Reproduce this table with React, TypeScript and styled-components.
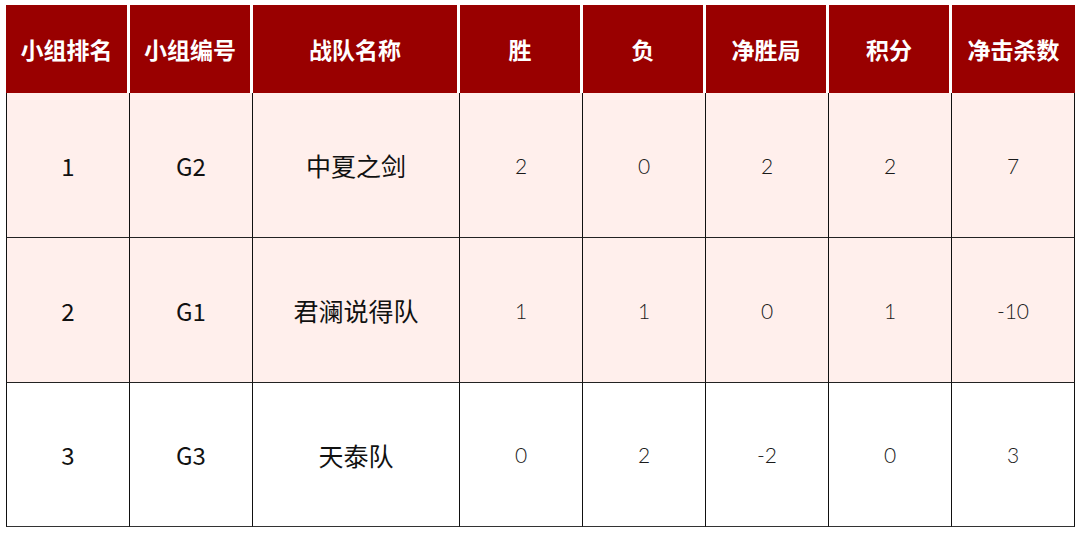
import { FC } from 'react';
import styled, { createGlobalStyle } from 'styled-components';

type Row = {
  rank: string;
  group: string;
  team: string;
  stats: string[];
  tinted: boolean;
};

const headers: string[] = ['小组排名', '小组编号', '战队名称', '胜', '负', '净胜局', '积分', '净击杀数'];

const rows: Row[] = [
  { rank: '1', group: 'G2', team: '中夏之剑', stats: ['2', '0', '2', '2', '7'], tinted: true },
  { rank: '2', group: 'G1', team: '君澜说得队', stats: ['1', '1', '0', '1', '-10'], tinted: true },
  { rank: '3', group: 'G3', team: '天泰队', stats: ['0', '2', '-2', '0', '3'], tinted: false },
];

const GlobalStyle = createGlobalStyle`
  html, body {
    margin: 0;
    padding: 0;
    background: #fff;
  }
  body {
    font-family: "Noto Sans CJK SC", "Noto Sans", sans-serif;
  }
`;

const App: FC = () => (
  <>
    <GlobalStyle />
    <Page>
      <Grid>
        {headers.map((title) => (
          <HeadCell key={title}>{title}</HeadCell>
        ))}
        {rows.map((row, i) => (
          <BodyRow key={row.rank} $tinted={row.tinted} $last={i === rows.length - 1}>
            <Cell $first>
              <MainText>{row.rank}</MainText>
            </Cell>
            <Cell>
              <MainText>{row.group}</MainText>
            </Cell>
            <Cell>
              <TeamText>{row.team}</TeamText>
            </Cell>
            {row.stats.map((value, j) => (
              <Cell key={j}>
                <StatText>{value}</StatText>
              </Cell>
            ))}
          </BodyRow>
        ))}
      </Grid>
    </Page>
  </>
);

export default App;

const Page = styled.div`
  width: 1080px;
  height: 534px;
  padding: 5px 6px 0 6px;
  box-sizing: border-box;
`;

const Grid = styled.div`
  display: grid;
  grid-template-columns: 124px 123px 207px repeat(5, 123px);
  grid-template-rows: 88px 145px 145px 144px;
  width: 1069px;
`;

const HeadCell = styled.div`
  display: flex;
  align-items: center;
  justify-content: center;
  background: #990000;
  color: #fff;
  font-size: 23px;
  font-weight: 700;
  border-right: 3px solid #fff;
  box-sizing: border-box;

  &:nth-child(8) {
    border-right: none;
  }
`;

const BodyRow = styled.div<{ $tinted: boolean; $last: boolean }>`
  display: contents;

  & > div {
    background: ${(p) => (p.$tinted ? '#FFEFEC' : '#fff')};
    border-bottom: 1px solid ${(p) => (p.$last ? '#333' : '#222')};
  }
`;

const Cell = styled.div<{ $first?: boolean }>`
  display: flex;
  align-items: center;
  justify-content: center;
  box-sizing: border-box;
  border-right: 1px solid #111;
  border-left: ${(p) => (p.$first ? '1px solid #111' : 'none')};
  color: #111;
`;

const MainText = styled.span`
  font-size: 24px;
`;

const TeamText = styled.span`
  font-size: 25px;
`;

const StatText = styled.span`
  font-family: "Lato", "Noto Sans", sans-serif;
  font-weight: 300;
  font-size: 21px;
  color: #1a1a1a;
`;
